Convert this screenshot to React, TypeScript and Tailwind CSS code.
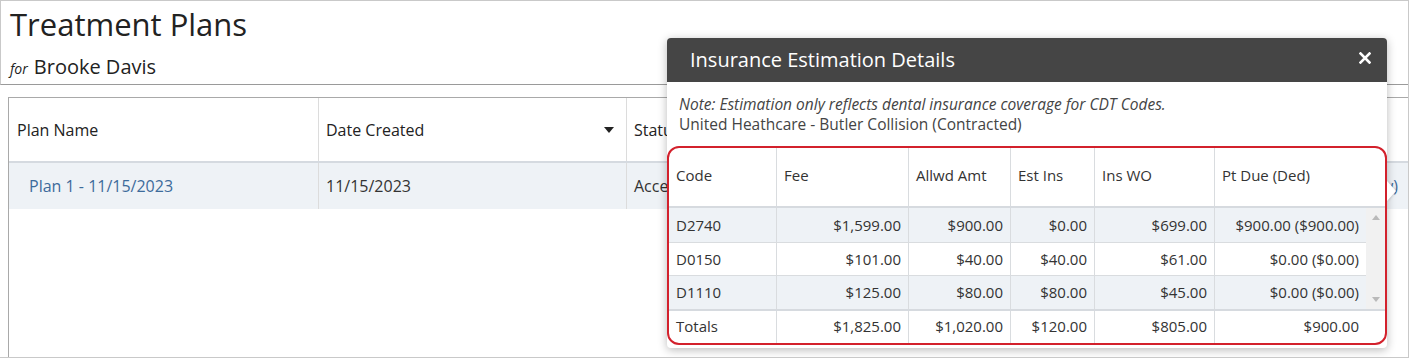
import React from 'react';

const cols = ['w-[107px]', 'w-[132px]', 'w-[102px]', 'w-[84px]', 'w-[120px]', 'w-[152px]'];

const headers = ['Code', 'Fee', 'Allwd Amt', 'Est Ins', 'Ins WO', 'Pt Due (Ded)'];

const rows = [
  ['D2740', '$1,599.00', '$900.00', '$0.00', '$699.00', '$900.00 ($900.00)'],
  ['D0150', '$101.00', '$40.00', '$40.00', '$61.00', '$0.00 ($0.00)'],
  ['D1110', '$125.00', '$80.00', '$80.00', '$45.00', '$0.00 ($0.00)'],
];

const totals = ['Totals', '$1,825.00', '$1,020.00', '$120.00', '$805.00', '$900.00'];

function Cell({ i, text, right, head }: { i: number; text: string; right?: boolean; head?: boolean }) {
  return (
    <div
      className={`${cols[i]} shrink-0 flex items-center px-[7px] ${head ? 'pb-[4px]' : ''} ${
        i > 0 ? 'border-l border-[#d9dcdf]' : ''
      } ${right && i > 0 ? 'justify-end' : 'justify-start'}`}
    >
      {text}
    </div>
  );
}

function EstimationPopup() {
  return (
    <div className="absolute left-[667px] top-[37px] w-[720px] bg-white shadow-[0_2px_10px_rgba(0,0,0,0.28)] rounded-[4px]">
      {/* header bar */}
      <div className="h-[44px] bg-[#454545] rounded-t-[4px] flex items-center justify-between pl-[23px] pr-[16px]">
        <span className="text-white text-[20px] leading-[28px]">Insurance Estimation Details</span>
        <svg width="12" height="12" viewBox="0 0 12 12" className="mb-[5px]">
          <path d="M1.5 1.5 L10.5 10.5 M10.5 1.5 L1.5 10.5" stroke="#fff" strokeWidth="2.6" strokeLinecap="square" />
        </svg>
      </div>

      {/* pointer arrow */}
      <div className="absolute right-[-9px] top-[143px] w-0 h-0 border-y-[10px] border-y-transparent border-l-[9px] border-l-white drop-shadow-[1px_0_1px_rgba(0,0,0,0.15)]" />

      <div className="px-[12px] pt-[12px] pb-[12px] text-[15.5px] leading-[20px] text-[#444]">
        <div className="italic">Note: Estimation only reflects dental insurance coverage for CDT Codes.</div>
        <div>United Heathcare - Butler Collision (Contracted)</div>
      </div>

      {/* highlighted estimation table */}
      <div className="border-2 border-[#d3212c] rounded-[12px] overflow-hidden text-[15px] text-[#333] mb-[3px]">
        <div className="flex h-[60px] border-b-2 border-[#d6dadf]">
          {headers.map((h, i) => (
            <Cell key={h} i={i} text={h} head />
          ))}
        </div>

        <div className="flex">
          <div>
            {rows.map((r, ri) => (
              <div
                key={r[0]}
                className={`flex h-[33.5px] ${ri % 2 === 0 ? 'bg-[#eef2f6]' : 'bg-white'} ${
                  ri > 0 ? 'border-t border-[#d9dcdf]' : ''
                }`}
              >
                {r.map((c, i) => (
                  <Cell key={i} i={i} text={c} right />
                ))}
              </div>
            ))}
          </div>
          {/* scrollbar */}
          <div className="w-[19px] bg-[#f1f1f1] flex flex-col items-center justify-between py-[7px]">
            <div className="w-0 h-0 border-x-[4px] border-x-transparent border-b-[5px] border-b-[#b9b9b9]" />
            <div className="w-0 h-0 border-x-[4px] border-x-transparent border-t-[5px] border-t-[#b9b9b9]" />
          </div>
        </div>

        <div className="flex h-[34px] border-t-2 border-[#d6dadf]">
          {totals.map((c, i) => (
            <Cell key={i} i={i} text={c} right />
          ))}
        </div>
      </div>
    </div>
  );
}

export default function App() {
  return (
    <div className="relative w-[1409px] h-[358px] bg-white border-t border-r border-b border-[#c9c9c9] font-['Open_Sans',sans-serif] text-[#333] overflow-hidden">
      {/* page header */}
      <div className="h-[84px] border-l border-b border-l-[#c9c9c9] border-b-[#9a9a9a] pl-[9px] pt-[3px]">
        <h1 className="text-[31px] leading-[40px] text-[#222]">Treatment Plans</h1>
        <div className="mt-[9px] leading-[28px] text-[#222]">
          <span className="italic text-[14px] mr-[6px]">for</span>
          <span className="text-[20px]">Brooke Davis</span>
        </div>
      </div>

      {/* plans table */}
      <div className="ml-[8px] mt-[12px] h-[261px] border-t border-l border-[#a9a9a9]">
        <div className="flex h-[63px] text-[16px] font-medium text-[#222]">
          <div className="w-[309px] flex items-center pl-[8px]">Plan Name</div>
          <div className="w-[308px] flex items-center justify-between pl-[7px] pr-[12px] border-l border-[#dcdcdc]">
            <span>Date Created</span>
            <span className="w-0 h-0 border-x-[5px] border-x-transparent border-t-[6px] border-t-[#222]" />
          </div>
          <div className="w-[300px] flex items-center pl-[7px] border-l border-[#dcdcdc]">Status</div>
          <div className="flex-1 flex items-center pl-[7px] border-l border-[#dcdcdc]">Estimate</div>
        </div>
        <div className="flex h-[48px] bg-[#eef2f6] border-t-2 border-[#d5dae0] text-[16px]">
          <div className="w-[309px] flex items-center pl-[20px] text-[#3d6b9b]">Plan 1 - 11/15/2023</div>
          <div className="w-[308px] flex items-center pl-[7px] border-l border-[#dcdcdc]">11/15/2023</div>
          <div className="w-[300px] flex items-center pl-[7px] border-l border-[#dcdcdc]">Accepted</div>
          <div className="flex-1 flex items-center justify-end pr-[10px] border-l border-[#dcdcdc] text-[#3d6b9b]">
            (View)
          </div>
        </div>
      </div>

      <EstimationPopup />
    </div>
  );
}
